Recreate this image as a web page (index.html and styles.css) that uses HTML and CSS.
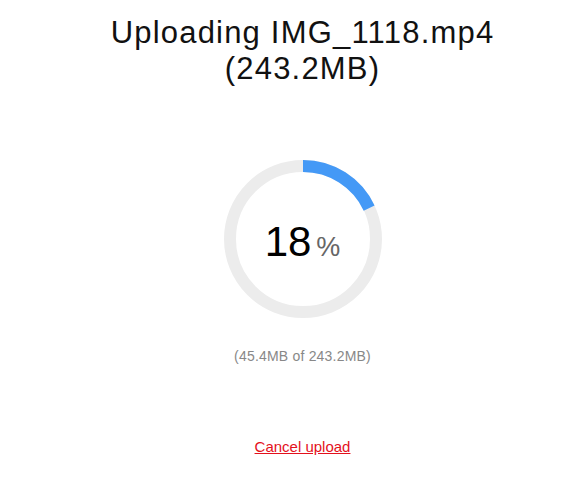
FILE: index.html
```html
<!DOCTYPE html>
<html lang="en">
  <head>
    <meta charset="UTF-8" />
    <meta name="viewport" content="width=device-width, initial-scale=1.0" />
    <title>Uploading</title>
    <link rel="stylesheet" href="styles.css">
  </head>
  <body>
    <div class="upload">
      <h1 class="title">Uploading IMG_1118.mp4<br />(243.2MB)</h1>

      <div class="progress">
        <svg class="ring" width="160" height="160" viewBox="0 0 160 160">
          <circle class="track" cx="80" cy="80" r="73" />
          <circle class="bar" cx="80" cy="80" r="73"
            stroke-dasharray="82.56 458.67" />
        </svg>
        <div class="percent">18<span class="sign">%</span></div>
      </div>

      <p class="size">(45.4MB of 243.2MB)</p>

      <a class="cancel" href="#">Cancel upload</a>
    </div>
  </body>
</html>
```

FILE: styles.css
```css
body {
  margin: 0;
  background: #fff;
  color: #111;
  font-family: "Liberation Sans", Arial, sans-serif;
}

.upload {
  display: flex;
  flex-direction: column;
  align-items: center;
  padding-left: 20px;
}

.title {
  margin: 15px 0 0;
  font-size: 31px;
  font-weight: normal;
  line-height: 36px;
  letter-spacing: 1.2px;
  text-align: center;
}

.progress {
  display: grid;
  place-items: center;
  margin-top: 72px;
}

.ring,
.percent {
  grid-area: 1 / 1;
}

.ring {
  transform: rotate(-90deg);
}

.track {
  fill: none;
  stroke: #ececec;
  stroke-width: 12;
}

.bar {
  fill: none;
  stroke: #4499f6;
  stroke-width: 12;
}

.percent {
  font-size: 42px;
  line-height: 1;
  margin-top: 5px;
  color: #000;
}

.sign {
  font-size: 27px;
  margin-left: 5px;
  color: #666;
}

.size {
  margin: 29px 0 0;
  font-size: 14px;
  line-height: 16px;
  letter-spacing: 0.2px;
  color: #888;
}

.cancel {
  margin-top: 74px;
  font-size: 15px;
  line-height: 17px;
  color: #e4101c;
}
```
